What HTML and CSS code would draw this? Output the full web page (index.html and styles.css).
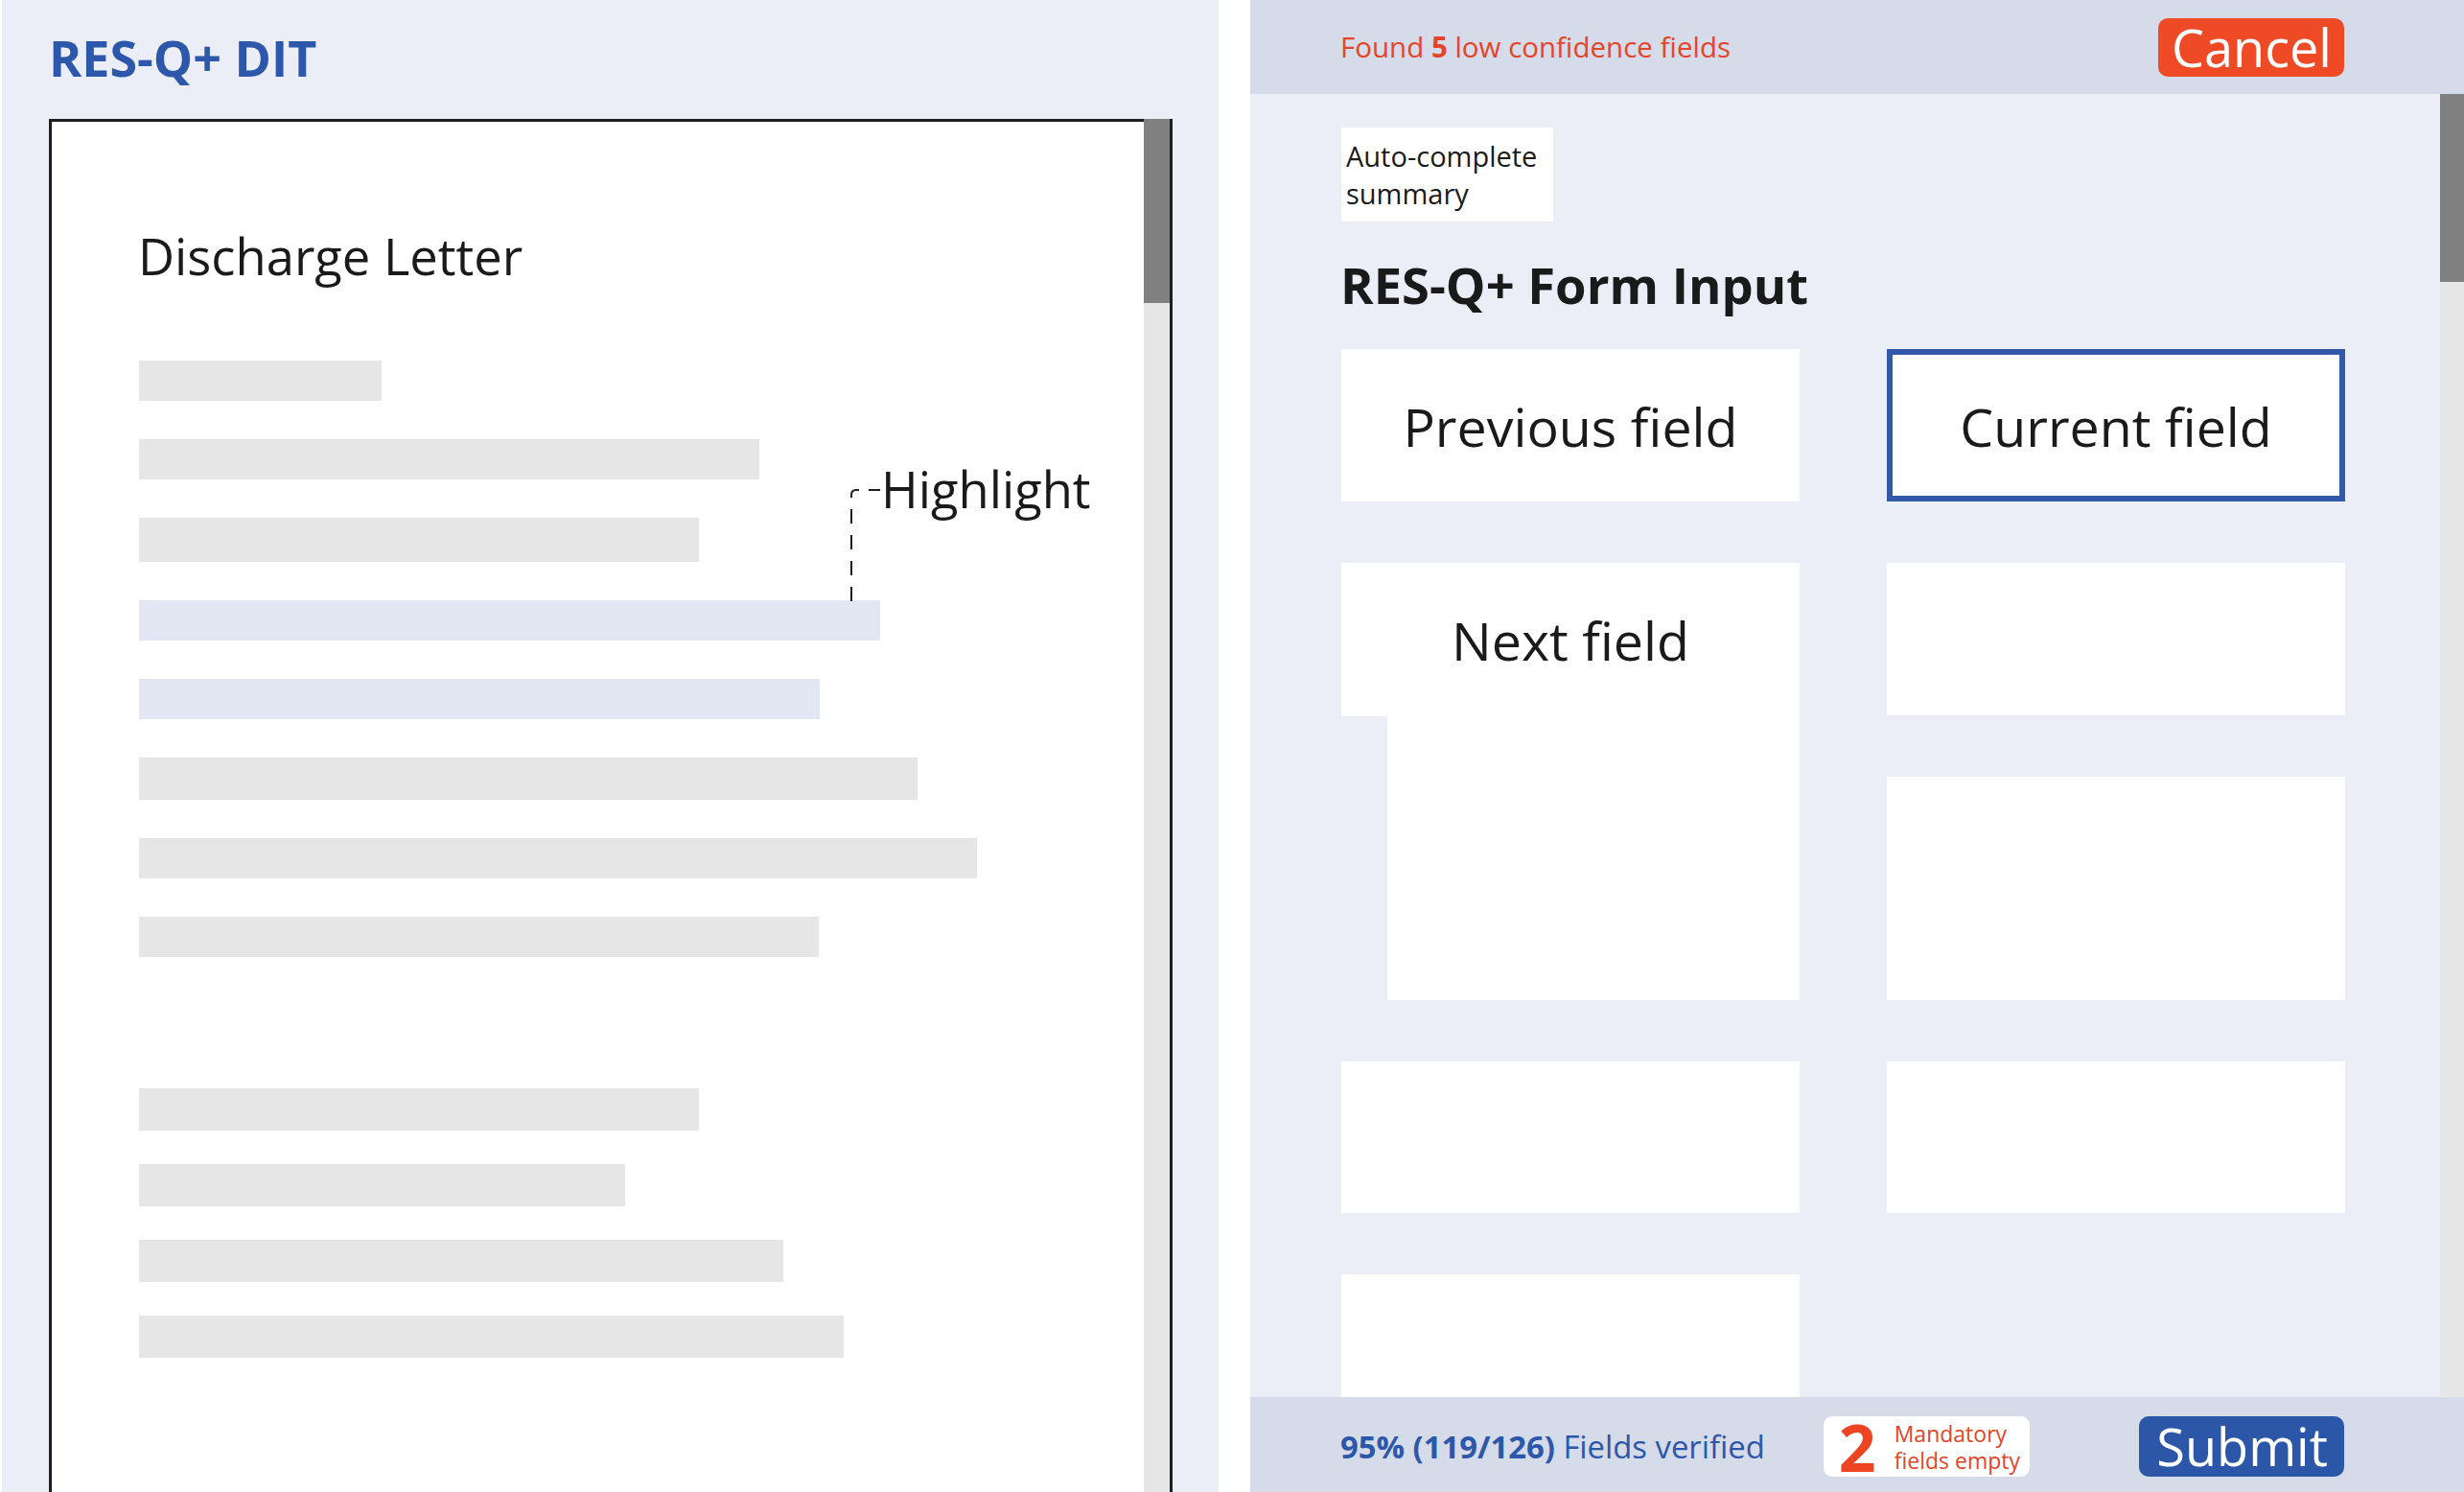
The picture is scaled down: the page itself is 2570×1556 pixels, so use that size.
FILE: index.html
```html
<!DOCTYPE html>
<html lang="en">
<head>
<meta charset="utf-8">
<title>RES-Q+ DIT</title>
<link rel="stylesheet" href="styles.css">
</head>
<body>
<div class="app">
  <section class="left">
    <h1 class="title">RES-Q+ DIT</h1>
    <div class="doc">
      <div class="doc-page">
        <h2 class="doc-title">Discharge Letter</h2>
        <div class="lines">
          <div class="line" style="width:253px"></div>
          <div class="line" style="width:647px"></div>
          <div class="line tall" style="width:584px"></div>
          <div class="line hl" style="width:773px"></div>
          <div class="line hl" style="width:710px"></div>
          <div class="line mid" style="width:812px"></div>
          <div class="line" style="width:874px"></div>
          <div class="line" style="width:709px"></div>
        </div>
        <div class="lines second">
          <div class="line" style="width:584px"></div>
          <div class="line" style="width:507px"></div>
          <div class="line" style="width:672px"></div>
          <div class="line" style="width:735px"></div>
        </div>
        <div class="annot">
          <svg class="annot-link" width="36" height="118" viewBox="0 0 36 118">
            <path d="M2 118 V7 Q2 2 7 2 H10 M20 2 H32" fill="none" stroke="#1f1f1f" stroke-width="2" stroke-dasharray="15 12"/>
          </svg>
          <span class="annot-text">Highlight</span>
        </div>
      </div>
      <div class="doc-scroll"><div class="doc-thumb"></div></div>
    </div>
  </section>

  <section class="right">
    <header class="rhead">
      <span class="found">Found <b>5</b> low confidence fields</span>
      <button class="btn btn-cancel">Cancel</button>
    </header>
    <div class="rbody">
      <div class="rcontent">
        <div class="autobox">Auto-complete<br>summary</div>
        <h2 class="form-title">RES-Q+ Form Input</h2>
        <div class="grid">
          <div class="field">Previous field</div>
          <div class="field current">Current field</div>
          <div class="next">
            <div class="field next-top">Next field</div>
            <div class="next-ext"></div>
          </div>
          <div class="field"></div>
          <div class="field"></div>
          <div class="field"></div>
          <div class="field"></div>
          <div class="field"></div>
        </div>
      </div>
      <div class="rscroll"><div class="rthumb"></div></div>
    </div>
    <footer class="rfoot">
      <span class="verified"><b>95% (119/126)</b> Fields verified</span>
      <div class="badge">
        <span class="badge-num">2</span>
        <span class="badge-txt">Mandatory<br>fields empty</span>
      </div>
      <button class="btn btn-submit">Submit</button>
    </footer>
  </section>
</div>
</body>
</html>
```

FILE: styles.css
```css
* { box-sizing: border-box; }

html, body {
  margin: 0;
  padding: 0;
  background: #ffffff;
}

body {
  font-family: "Open Sans", "Noto Sans", sans-serif;
  color: #1a1a1a;
}

.app {
  display: flex;
  width: 2570px;
  height: 1556px;
  overflow: hidden;
  padding-left: 2px;
}

/* ---------- left panel ---------- */
.left {
  width: 1269px;
  height: 1556px;
  flex-shrink: 0;
  background: #ebeef7;
  padding: 24px 48px 0 49px;
  display: flex;
  flex-direction: column;
  overflow: hidden;
}

.title {
  margin: 0 0 29px 0;
  font-size: 52px;
  line-height: 71px;
  font-weight: 700;
  color: #2c57ab;
}

.doc {
  display: flex;
  width: 1172px;
  height: 1480px;
  flex-shrink: 0;
  border-left: 3px solid #1e1e1e;
  border-right: 3px solid #1e1e1e;
}

.doc-page {
  position: relative;
  flex: 1;
  background: #ffffff;
  border-top: 3px solid #1e1e1e;
  padding: 104px 0 0 91px;
}

.doc-title {
  margin: 0 0 0 -1px;
  font-size: 52.5px;
  line-height: 71px;
  font-weight: 400;
  color: #1a1a1a;
}

.lines {
  margin-top: 74px;
  display: flex;
  flex-direction: column;
  align-items: flex-start;
  gap: 40px;
}

.lines.second {
  margin-top: 137px;
  gap: 35px;
}

.line {
  height: 42px;
  background: #e6e6e6;
}
.line.tall { height: 46px; }
.line.mid { height: 44px; }
.lines.second .line { height: 44px; }
.line.hl { background: #e3e6f3; }

.annot {
  position: absolute;
  left: 832px;
  top: 347px;
  width: 320px;
  height: 160px;
}

.annot-link {
  position: absolute;
  left: 0;
  top: 35px;
  display: block;
}

.annot-text {
  position: absolute;
  left: 33px;
  top: 0;
  font-size: 52.5px;
  line-height: 71px;
  color: #1a1a1a;
  white-space: nowrap;
}

.doc-scroll {
  width: 27px;
  flex-shrink: 0;
  background: #e6e6e6;
}

.doc-thumb {
  height: 192px;
  background: #808080;
}

/* ---------- right panel ---------- */
.right {
  width: 1266px;
  height: 1556px;
  flex-shrink: 0;
  margin-left: 33px;
  background: #ebeef7;
  display: flex;
  flex-direction: column;
}

.rhead {
  height: 98px;
  flex-shrink: 0;
  background: #d5dbe8;
  display: flex;
  align-items: center;
  justify-content: space-between;
  padding: 0 125px 0 94px;
}

.found {
  font-size: 29.5px;
  line-height: 40px;
  color: #e5452a;
}
.found b { font-weight: 700; }

.btn {
  border: 0;
  margin: 0;
  font-family: "Open Sans", "Noto Sans", sans-serif;
  font-size: 54px;
  color: #ffffff;
  border-radius: 10px;
  cursor: pointer;
}

.btn-cancel {
  height: 61px;
  line-height: 61px;
  padding: 0 13px 0 14px;
  background: #ef4a26;
}

.rbody {
  flex: 1;
  min-height: 0;
  display: flex;
  overflow: hidden;
}

.rcontent {
  flex: 1;
  padding: 35px 0 0 95px;
  overflow: hidden;
}

.autobox {
  width: 221px;
  height: 98px;
  padding: 10px 10px 10px 5px;
  background: #ffffff;
  font-size: 29px;
  line-height: 39px;
  white-space: nowrap;
  color: #1a1a1a;
}

.form-title {
  margin: 30px 0 0 -1px;
  font-size: 52.5px;
  line-height: 71px;
  font-weight: 700;
  color: #1a1a1a;
}

.grid {
  margin-top: 32px;
  display: grid;
  grid-template-columns: 478px 478px;
  grid-template-rows: 159px 159px 233px 158px 159px;
  column-gap: 91px;
  row-gap: 64px;
}

.field {
  background: #ffffff;
  display: flex;
  align-items: center;
  justify-content: center;
  padding-top: 2px;
  font-size: 55.5px;
  line-height: 74px;
  color: #1a1a1a;
}

.field.current {
  border: 6px solid #3159a8;
}

.next {
  grid-row: 2 / span 2;
  display: flex;
  flex-direction: column;
}

.next-top {
  height: 160px;
  flex-shrink: 0;
}

.next-ext {
  flex: 1;
  margin-left: 48px;
  background: #ffffff;
}

.rscroll {
  width: 25px;
  flex-shrink: 0;
  background: #e6e6e6;
}

.rthumb {
  height: 196px;
  background: #808080;
}

.rfoot {
  height: 99px;
  flex-shrink: 0;
  background: #d5dbe8;
  display: flex;
  align-items: center;
  padding: 4px 125px 0 94px;
}

.verified {
  font-size: 32.8px;
  line-height: 44px;
  color: #2c57ab;
}
.verified b { font-weight: 700; }

.badge {
  margin-left: 61px;
  height: 63px;
  display: flex;
  align-items: center;
  padding: 0 10px 0 16px;
  background: #ffffff;
  border-radius: 9px;
}

.badge-num {
  font-size: 68px;
  line-height: 63px;
  font-weight: 700;
  color: #ee4422;
}

.badge-txt {
  margin-left: 19px;
  font-size: 23px;
  line-height: 28px;
  color: #e0462a;
  white-space: nowrap;
}

.btn-submit {
  margin-left: auto;
  height: 63px;
  line-height: 63px;
  padding: 0 17px 0 18px;
  background: #2c56a8;
}
```
